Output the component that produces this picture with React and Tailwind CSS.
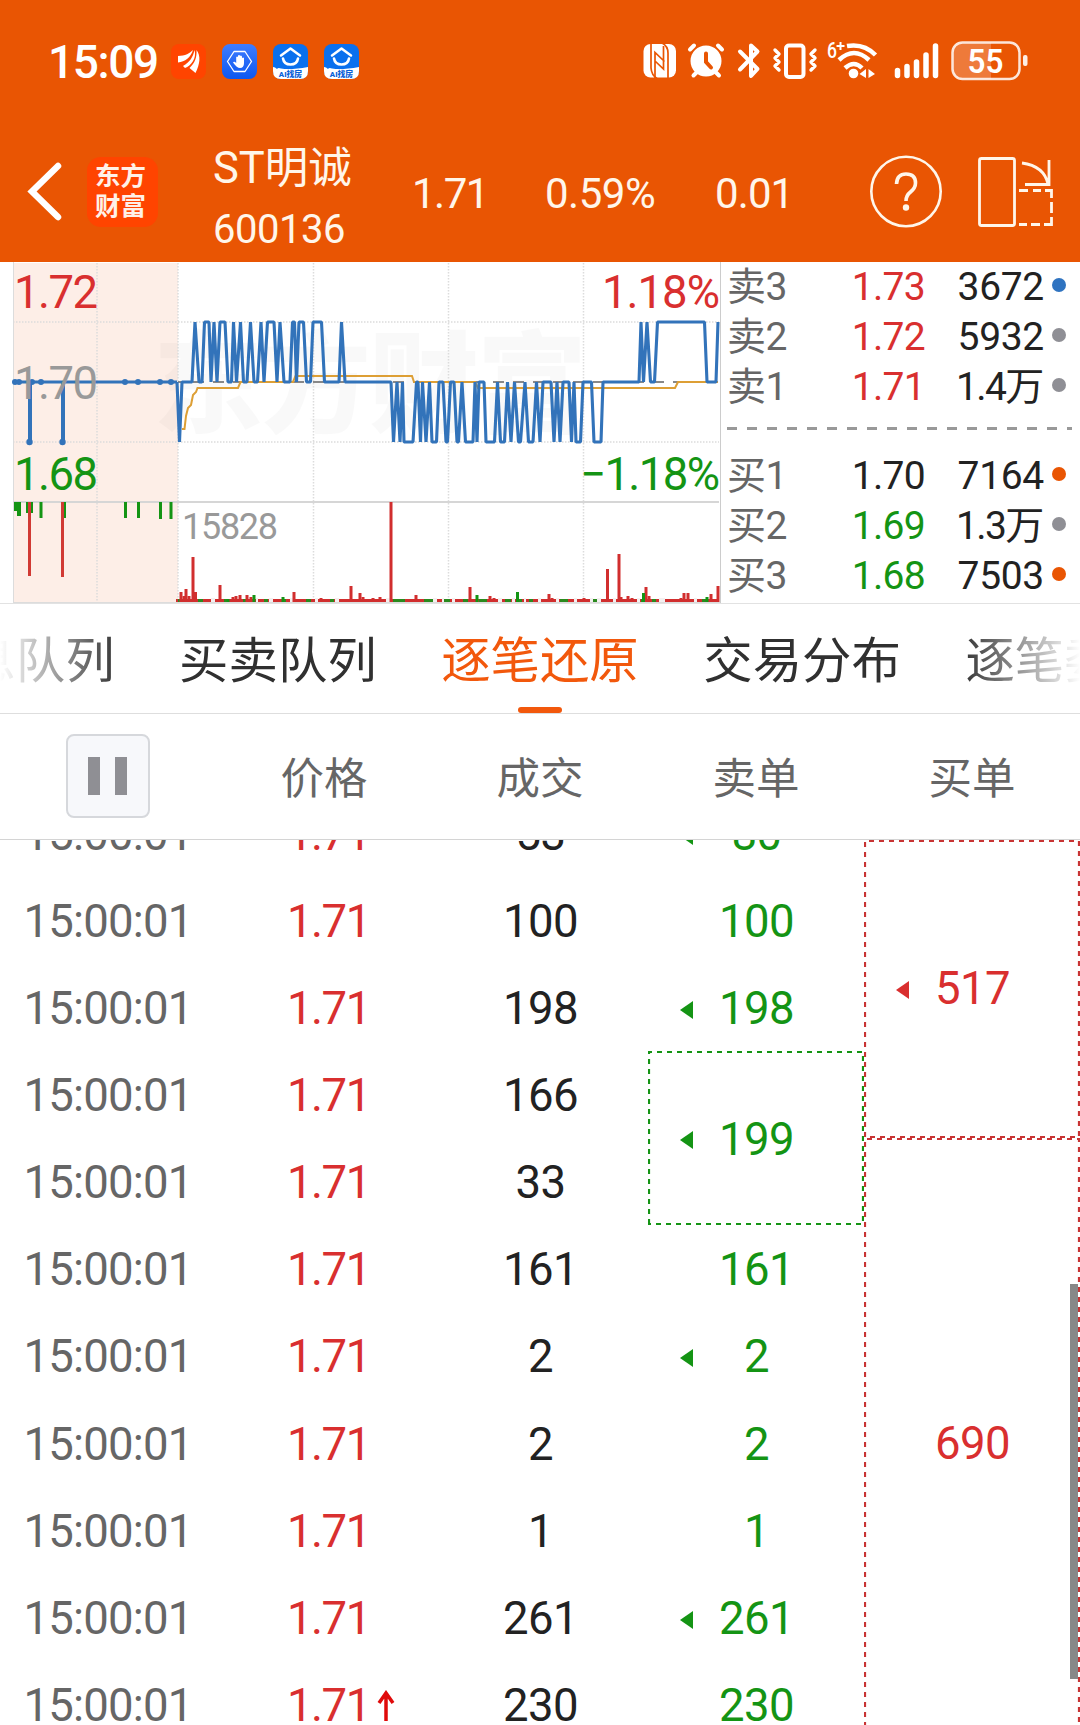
import React from "react";

const TIME = "15:00:01";
const DEALS = ["53", "100", "198", "166", "33", "161", "2", "2", "1", "261", "230"];
const SELLS = [
  { v: "80", mark: true },
  { v: "100" },
  { v: "198", mark: true },
  { v: "199", mark: true, merged: true },
  { v: "161" },
  { v: "2", mark: true },
  { v: "2" },
  { v: "1" },
  { v: "261", mark: true },
  { v: "230" },
];

const ASKS = [
  ["卖3", "1.73", "3672", "bg-[#2f73c0]"],
  ["卖2", "1.72", "5932", "bg-[#8f8f95]"],
  ["卖1", "1.71", "1.4万", "bg-[#8f8f95]"],
];
const BIDS = [
  ["买1", "1.70", "7164", "bg-[#e95503]", "text-[#222]"],
  ["买2", "1.69", "1.3万", "bg-[#8f8f95]", "text-[#149414]"],
  ["买3", "1.68", "7503", "bg-[#e95503]", "text-[#149414]"],
];

const PRICE_LINE =
  "177,382 179.5,442 182,382 192,382 195,322 199,382 202,382 204.5,322 209,322 211,382 214,322 217,382 220,322 225,322 228,382 231.5,382 233.5,322 236.5,382 240.5,322 243.5,382 247,382 250.5,322 254,382 257.5,382 261,322 264,382 267.5,322 274,322 277,382 280,322 284,382 290,382 292.5,322 294.5,322 296.5,382 299,322 303.5,322 306.5,382 310.5,382 313,322 321.5,322 324.5,382 339,382 341.5,322 345,382 391,382 393.5,442 397,382 400,442 402.5,382 404,442 413,442 416.5,382 418,382 420.5,442 422.5,382 426,442 429.5,382 432,442 436.5,442 439,382 443,382 446,442 447.5,442 450.5,382 454,382 457,442 458.5,442 462,382 465.5,442 473,442 475,382 477,442 479,382 484,382 486,442 494.5,442 497.5,382 500.5,442 504.5,442 507.5,382 511,442 514.5,382 518.5,442 520.5,442 525,382 528.5,442 533,442 536.5,382 540,442 543,382 551,382 554,442 557,382 560,442 563,382 569,382 571.5,442 574,382 576,442 580.5,442 583,382 591.5,382 594,442 601,442 603,382 639,382 641,322 643.5,382 647,322 650.5,382 654.5,382 657.5,322 704.5,322 707,382 716,382 718,322";
const AVG_LINE =
  "182,429 184.5,429 186,416 188,408 191,405 193,395 196,392 197.5,388 238,388 240.5,382 293,382 295.5,376 412,376 414,382 475,382 478,388 675,388 678,382 718,382";

const RED_BARS = [
  [181, 592], [184, 596], [186, 589], [189, 596], [193, 557], [195.5, 592], [205, 599], [220, 585], [233, 597], [236, 596], [240, 595], [247, 595], [251, 597], [294, 592], [321, 598],
  [351, 586], [360, 593], [363, 597], [373, 598], [380, 597], [391, 502], [416, 595], [470, 587], [490, 596], [494, 598], [549, 594], [552, 598], [584, 598],
  [607.5, 569], [619, 554], [621, 597], [628, 596], [632, 598], [646, 587], [649, 596], [681, 598], [684, 593], [688, 593], [711, 594], [718, 586],
];
const GREEN_BARS = [[254, 595], [228, 599], [283, 597], [477, 595], [517.5, 592], [643.5, 593], [707, 597]];
const GREEN_BASE = [[178, 4], [198, 5], [224, 4], [243, 3], [264, 4], [282, 4], [306, 5], [330, 4], [393, 12], [424, 9], [444, 6], [463, 5], [479, 8], [505, 6], [518, 4], [529, 4], [560, 8], [593, 4], [641, 4], [652, 4], [702, 6]];
const GAP_BASE = [[211, 4], [256, 2], [269, 4], [290, 3], [315, 3], [335, 4], [386, 4], [433, 4], [442, 2], [452, 3], [498, 4], [512, 3], [524, 2], [538, 3], [556, 3], [574, 3], [590, 3], [597, 4], [613, 3], [637, 3], [659, 6], [694, 3]];
const PRE_TICKS = [[14, 3, 511], [17, 4, 516], [26, 7, 513], [39.5, 3, 518], [63, 3, 518], [124, 3, 518], [137, 3, 518], [159, 3, 519], [169.5, 3, 519]];

function Chart() {
  return (
    <svg className="block h-[342px] w-[722px] shrink-0" viewBox="0 262 722 342">
      <rect x="13" y="263" width="165" height="339" fill="#fdeee7" />
      <g fontFamily="'Noto Sans CJK SC', sans-serif" fontWeight="900" fill="#000" fillOpacity="0.025">
        <text x="153" y="424" fontSize="110" textLength="434">东方财富</text>
      </g>
      <g stroke="#dcdcdc" strokeWidth="1.5" strokeDasharray="1.5 1.5">
        <path d="M97 263V602M178 263V602M313.5 263V602M448.5 263V602M583.5 263V602" />
        <path d="M13 322H719M13 442H719" />
      </g>
      <path d="M13.5 262V602M13 602.5H720" stroke="#dcdcdc" fill="none" />
      <path d="M13 502H719" stroke="#d6d6d6" strokeWidth="2" />
      <path d="M720.5 262V603" stroke="#cccccc" />
      <path d="M178 382H718" stroke="#888" strokeWidth="2" strokeDasharray="11 9" strokeDashoffset="5" />
      <polyline points={AVG_LINE} fill="none" stroke="#dd9f35" strokeWidth="2" />
      <polyline points={PRICE_LINE} fill="none" stroke="#3273ba" strokeWidth="3.1" strokeLinejoin="bevel" />
      <g fill="#3273ba" stroke="none">
        <rect x="13" y="380.5" width="164" height="3" />
        <rect x="28" y="382" width="4" height="60" />
        <rect x="61" y="382" width="4" height="60" />
        {[15, 19, 32, 41, 125, 138, 160, 171].map((x) => (
          <circle key={x} cx={x} cy="382" r="3" />
        ))}
        <circle cx="29.5" cy="442" r="3.2" />
        <circle cx="62.5" cy="442" r="3.2" />
      </g>
      <rect x="176" y="599" width="543" height="3" fill="#d12e2e" />
      {GAP_BASE.map(([x, w]) => (
        <rect key={x} x={x} y="598" width={w} height="4" fill="#f4f0f0" />
      ))}
      {GREEN_BASE.map(([x, w]) => (
        <rect key={x} x={x} y="599" width={w} height="3" fill="#2a8a1e" />
      ))}
      {RED_BARS.map(([x, y]) => (
        <rect key={x} x={x - 1.5} y={y} width="3" height={602 - y} fill="#d12e2e" />
      ))}
      {GREEN_BARS.map(([x, y]) => (
        <rect key={x} x={x - 1.5} y={y} width="3" height={602 - y} fill="#149414" />
      ))}
      {PRE_TICKS.map(([x, w, y]) => (
        <rect key={x} x={x} y="502" width={w} height={y - 502} fill="#149414" />
      ))}
      <rect x="28" y="502" width="3" height="74" fill="#d13a34" />
      <rect x="61" y="502" width="3" height="75" fill="#d13a34" />
      <g fontFamily="Roboto, sans-serif" fontSize="45.5">
        <text x="14" y="308" fill="#d92f2f" textLength="84">1.72</text>
        <text x="14" y="399" fill="#999" textLength="84">1.70</text>
        <text x="14" y="490" fill="#149414" textLength="84">1.68</text>
        <text x="602" y="308" fill="#d92f2f" textLength="118">1.18%</text>
        <text x="580" y="490" fill="#149414" textLength="140">−1.18%</text>
        <text x="182" y="539" fill="#999" fontSize="36" textLength="96">15828</text>
      </g>
    </svg>
  );
}

function BookRow({ row, tone }) {
  const [label, price, qty, dot] = row;
  return (
    <div className="flex h-[50px] items-center text-[39px] leading-none">
      <span className="w-[100px] tracking-[-0.6px] text-[#666]">{label}</span>
      <span className={`w-[98px] text-right tracking-[-0.7px] ${tone}`}>{price}</span>
      <span className="w-[119px] text-right tracking-[-0.3px] text-[#222]">
        {qty.endsWith("万") ? (
          <>
            <span className="tracking-[-1.6px]">{qty.slice(0, -1)}</span>万
          </>
        ) : (
          qty
        )}
      </span>
      <span className={`-mt-1 ml-[8px] size-[14px] rounded-full ${dot}`} />
    </div>
  );
}

function Triangle({ className }) {
  return (
    <svg className={className} width="13" height="18" viewBox="0 0 13 18">
      <path d="M0 9L13 0V18Z" fill="currentColor" />
    </svg>
  );
}

function DashedBox({ className, d }) {
  return (
    <svg className={className} aria-hidden="true">
      <path d={d} fill="none" stroke="currentColor" strokeWidth="2.2" strokeDasharray="5 5" />
    </svg>
  );
}

function HouseIcon() {
  return (
    <svg width="35" height="35" viewBox="0 0 35 35">
      <rect width="35" height="35" rx="8" fill="#0a70ee" />
      <path d="M0 23Q2 23 4 25Q5 23.5 8 24.5Q18 26 35 23V27Q35 35 27 35H8Q0 35 0 27Z" fill="#fff" />
      <path d="M8 11.5L17.5 4.5L27 11.5" fill="none" stroke="#fff" strokeWidth="2.5" strokeLinejoin="round" strokeLinecap="round" />
      <path d="M10 14.5Q11 20.5 17.5 20.5T25 14.5" fill="none" stroke="#fff" strokeWidth="2.6" strokeLinecap="round" />
      <text x="17.5" y="33" textAnchor="middle" fontSize="7.8" fontWeight="900" fill="#0a60d8" fontFamily="Roboto, 'Noto Sans CJK SC', sans-serif">AI找房</text>
    </svg>
  );
}

function StatusBar() {
  return (
    <div className="flex h-[122px] items-center pl-[48px] text-white">
      <span className="mt-[2px] w-[123px] text-[46px] leading-none font-medium tracking-[-1.4px]">15:09</span>
      <div className="flex gap-[16px]">
        <svg width="35" height="35" viewBox="0 0 35 35">
          <rect width="35" height="35" rx="8" fill="#ff4400" />
          <path d="M7 12C14 12 19 9 22 6C20 13 14 18 7 18.5Z M12 22C19 18 22 13 23.500 6C26 14 20 22 14 24Z M18.500 24C24 19 26 13 25.500 6C30 12 29 20 24.500 29Z" fill="#fff" />
        </svg>
        <svg width="35" height="35" viewBox="0 0 35 35">
          <defs>
            <linearGradient id="hand" x1="0" y1="0" x2="0" y2="1">
              <stop offset="0" stopColor="#3f7dff" />
              <stop offset="1" stopColor="#0c57f0" />
            </linearGradient>
          </defs>
          <rect width="35" height="35" rx="8" fill="url(#hand)" />
          <path d="M12 7.5H23L29.5 17.5L23 27.5H12L5.5 17.5Z" fill="none" stroke="#fff" strokeWidth="1.3" strokeLinejoin="round" />
          <path d="M14.2 20V13Q15.2 12 16 13V11.5Q17 10.5 18 11.5V12Q19 11 20 12.5V14Q21.2 13 22 14V19Q22 24 18 24Q15 24 11 18.5Q12 17 14.2 19Z" fill="#fff" />
        </svg>
        <HouseIcon />
        <HouseIcon />
      </div>
      <svg className="ml-[283px]" width="388" height="40" viewBox="642 41 388 40">
        <rect x="643.500" y="44" width="32.500" height="33.500" rx="7" fill="#fff" />
        <g fill="none" stroke="#e95503" strokeWidth="1.700">
          <path d="M651 43V68Q651.500 75 657 78.500M662 43Q668 46 668 53V78.500" />
          <path d="M655 78V52.500L664.500 61.500M663.500 46V69L655 61" />
        </g>
        <g stroke="#fff" strokeWidth="4" strokeLinecap="round" fill="none">
          <circle cx="706" cy="61" r="13.500" fill="#fff" />
          <path d="M690 49.500L694 45.500M718 45.500L722 49.500M697 72L693.500 75.500M715.500 72L719 75.500" />
          <path d="M706 53.500V62L711 67.500" stroke="#e95503" />
          <path d="M740 51.500L757.500 69L751 76V45.500L757.500 51.500L740 69.500" strokeLinejoin="round" />
          <path d="M775 50L779 54L775 58L779 62L775 66L779 70M815 50L811 54L815 58L811 62L815 66L811 70" strokeWidth="3.400" strokeLinejoin="round" />
        </g>
        <rect x="786" y="45.500" width="17.500" height="31.500" rx="3" fill="none" stroke="#fff" strokeWidth="4" />
        <text x="827" y="58" fontSize="22" fontWeight="500" fill="#fff" fontFamily="Roboto, sans-serif" textLength="10" lengthAdjust="spacingAndGlyphs">6</text>
        <path d="M840.500 42V50M836.500 46H844.500" stroke="#fff" strokeWidth="2" />
        <g fill="none" stroke="#fff" strokeWidth="4.500">
          <path d="M847 46Q864 43 875.500 55M839 60Q854 46 869 60M845 68Q854 60 862 68" />
        </g>
        <circle cx="853.500" cy="73.500" r="4.800" fill="#fff" />
        <path d="M859.500 74L866 69V78ZM875 74L868.500 69V78Z" fill="#fff" />
        <g stroke="#fff" strokeWidth="5.500" strokeLinecap="round">
          <path d="M897.500 70.500V75.500M907 66.500V75.500M916.500 62V75.500M926 55V75.500M935.500 46V75.500" />
        </g>
        <path d="M962 43H991V79H962Q953 79 953 69V53Q953 43 962 43Z" fill="#fff" opacity="0.220" />
        <rect x="952.500" y="42.500" width="67" height="36.500" rx="10" fill="none" stroke="#fff" strokeOpacity="0.850" strokeWidth="2.500" />
        <text x="967.500" y="73" fontSize="34" fontWeight="600" fill="#fff" fontFamily="Roboto, sans-serif" textLength="36" lengthAdjust="spacingAndGlyphs">55</text>
        <rect x="1023" y="55" width="4.500" height="11" rx="2" fill="#fff" fillOpacity="0.900" />
      </svg>
    </div>
  );
}

function NavBar() {
  return (
    <div className="flex h-[140px] items-center text-[42px] leading-none text-[#fff6ea]">
      <svg className="ml-[24px]" width="40" height="62" viewBox="0 0 40 62">
        <path d="M34 5L8 30.500L34 56" fill="none" stroke="#fff" strokeWidth="6.500" strokeLinecap="round" />
      </svg>
      <div className="ml-[23px] flex h-[70px] w-[71px] flex-col items-center justify-center rounded-[14px] bg-[#ff4400] pr-1 pb-[2px] text-[25.500px] leading-[30px] font-bold text-[#fff1e8]">
        <span>东方</span>
        <span>财富</span>
      </div>
      <div className="ml-[55px] flex w-[199px] flex-col pt-[14px]">
        <span className="h-[62px] text-[43.500px] leading-[62px] whitespace-nowrap">ST明诚</span>
        <span className="h-[60px] text-[40px] leading-[60px] tracking-[-0.500px]">600136</span>
      </div>
      <span className="mt-1 w-[133px] tracking-[-1.500px]">1.71</span>
      <span className="mt-1 w-[170px] tracking-[-0.500px]">0.59%</span>
      <span className="mt-1 w-[154px] tracking-[-0.900px]">0.01</span>
      <svg width="74" height="74" viewBox="0 0 74 74">
        <circle cx="37" cy="36.500" r="34.700" fill="none" stroke="currentColor" strokeWidth="2.600" />
        <path d="M27.500 29Q28 19 37 19Q46.500 19 46.500 28Q46.500 33 41.500 37Q37 40.500 37 46" fill="none" stroke="currentColor" strokeWidth="3.600" />
        <circle cx="37" cy="52.500" r="3.200" fill="currentColor" />
      </svg>
      <svg className="ml-[34px]" width="78" height="72" viewBox="977 155 78 72">
        <g fill="none" stroke="currentColor" strokeWidth="2.800">
          <rect x="979.500" y="157.500" width="35" height="67" rx="2" />
          <path d="M1022 162Q1044 165 1048 183M1049 159V183.500H1025" />
          <path d="M1019 189.500H1028M1033 189.500H1041M1045 189.500H1051.500V197M1051.500 201V212M1051.500 216V223.500H1044M1040 223.500H1031M1027 223.500H1019" />
        </g>
      </svg>
    </div>
  );
}

const TABS = ["信息队列", "买卖队列", "逐笔还原", "交易分布", "逐笔委托"];

export default function App() {
  return (
    <div className="h-[1725px] w-[1080px] overflow-hidden bg-white font-['Roboto','Noto_Sans_CJK_SC',sans-serif]">
      <header className="h-[262px] bg-[#e95503]">
        <StatusBar />
        <NavBar />
      </header>

      <section className="flex h-[342px] border-b border-[#e2e2e2]">
        <Chart />
        <div className="flex flex-col pl-[5px]">
          {ASKS.map((r) => (
            <BookRow key={r[0]} row={r} tone="text-[#d92f2f]" />
          ))}
          <div className="mt-[15px] mb-[21px] h-[3px] w-[345px] bg-[repeating-linear-gradient(90deg,#999_0_10px,transparent_10px_20px)]" />
          {BIDS.map((r) => (
            <BookRow key={r[0]} row={r} tone={r[4]} />
          ))}
        </div>
      </section>

      <nav className="relative h-[110px] overflow-hidden border-b border-[#dedede]">
        <div className="-ml-[83px] flex w-max gap-[64.500px] text-[49.400px] leading-[115px]">
          {TABS.map((t, i) => (
            <span key={i} className={`flex w-[197.600px] flex-col items-center whitespace-nowrap ${i === 2 ? "text-[#f2580c]" : "text-[#303030]"}`}>
              {t}
              {i === 2 && <i className="-mt-[12px] h-[6px] w-[44px] rounded-full bg-[#f2580c]" />}
            </span>
          ))}
        </div>
        <div className="absolute inset-y-0 left-0 w-[120px] bg-gradient-to-r from-white to-transparent" />
        <div className="absolute inset-y-0 right-0 w-[120px] bg-gradient-to-l from-white to-transparent" />
      </nav>

      <div className="grid h-[126px] grid-cols-5 items-center justify-items-center border-b border-[#d4d4d4] text-[43.500px] leading-none text-[#666]">
        <button className="-mt-[2px] mr-[1px] flex h-[84px] w-[84px] items-center justify-center gap-[15px] rounded-[8px] border-2 border-[#d6d8dc] bg-[#f7f8fb]">
          <i className="h-[38px] w-[12px] bg-[#8f8f94]" />
          <i className="h-[38px] w-[12px] bg-[#8f8f94]" />
        </button>
        <span className="mt-[6px]">价格</span>
        <span className="mt-[6px]">成交</span>
        <span className="mt-[6px]">卖单</span>
        <span className="mt-[6px]">买单</span>
      </div>

      <main className="relative grid h-[885px] grid-cols-5 overflow-hidden text-[45.500px] leading-none">
        <div className="-mt-[49px] tracking-[-0.800px] text-[#666]">
          {DEALS.map((_, i) => (
            <div key={i} className="flex h-[87.110px] items-center justify-center">{TIME}</div>
          ))}
        </div>
        <div className="-mt-[49px] tracking-[-1.500px] text-[#d92f2f]">
          {DEALS.map((_, i) => (
            <div key={i} className="flex h-[87.110px] items-center pl-[71px]">
              1.71
              {i === 10 && (
                <svg className="ml-[7px]" width="18" height="32" viewBox="0 0 18 32">
                  <path d="M9 31V3M2 13L9 3L16 13" fill="none" stroke="#e00a0a" strokeWidth="3.500" />
                </svg>
              )}
            </div>
          ))}
        </div>
        <div className="-mt-[49px] pl-[1px] tracking-[-0.600px] text-[#222]">
          {DEALS.map((v, i) => (
            <div key={i} className="flex h-[87.110px] items-center justify-center">{v}</div>
          ))}
        </div>
        <div className="-mt-[50px] tracking-[-0.600px] text-[#149414]">
          {SELLS.map((s, i) => (
            <div key={i} className={`relative flex items-center justify-center pt-[2px] pl-[1px] ${s.merged ? "h-[174.220px]" : "h-[87.110px]"}`}>
              {s.mark && <Triangle className="absolute left-[32px] mt-[2px]" />}
              {s.v}
              {s.merged && <DashedBox className="absolute inset-0 h-full w-full" d="M1 173V1H215V173Z" />}
            </div>
          ))}
        </div>
        <div className="tracking-[-0.600px] text-[#d92f2f]">
          <div className="relative flex h-[298px] items-center justify-center pl-[1px]">
            <Triangle className="absolute left-[32px] mt-[1px]" />
            517
            <DashedBox className="absolute inset-0 h-full w-full text-[#c83434]" d="M1 297V1H215V297Z" />
          </div>
          <div className="relative flex h-[610px] items-center justify-center pt-[2px] pl-[1px]">
            690
            <DashedBox className="absolute inset-0 h-full w-full text-[#c83434]" d="M1 609V1H215V609Z" />
          </div>
        </div>
        <div className="absolute top-[444px] right-[2px] h-[395px] w-[8px] bg-[#888]" />
      </main>
    </div>
  );
}
